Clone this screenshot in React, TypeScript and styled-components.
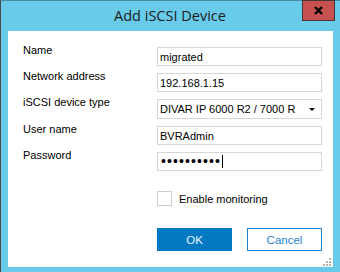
import React from 'react';
import styled, { createGlobalStyle } from 'styled-components';

const GlobalStyle = createGlobalStyle`
  html, body {
    margin: 0;
    padding: 0;
    background: #69cbea;
  }
`;

const Frame = styled.div`
  width: 340px;
  height: 272px;
  box-sizing: border-box;
  background: #69cbea;
  border-left: 1px solid #4a4a4a;
  border-top: 1px solid #4d8ba3;
  display: flex;
  flex-direction: column;
  font-family: "Liberation Sans", Arial, sans-serif;
`;

const TitleBar = styled.div`
  position: relative;
  height: 30px;
  display: flex;
  justify-content: center;
  padding-right: 1px;
`;

const Title = styled.div`
  font-family: "Open Sans", "Noto Sans", sans-serif;
  font-size: 14.5px;
  line-height: 20px;
  margin-top: 5px;
  color: #1b1b1b;
`;

const CloseButton = styled.div`
  position: absolute;
  top: -1px;
  right: 5px;
  width: 33px;
  height: 21px;
  box-sizing: border-box;
  background: #c75050;
  border: 1px solid #4a3535;
  display: flex;
  align-items: center;
  justify-content: center;
`;

const Client = styled.div`
  position: relative;
  margin-left: 7px;
  width: 325px;
  height: 236px;
  background: #fff;
  box-sizing: border-box;
  padding: 16px 11px 0 15px;
  display: flex;
  flex-direction: column;
`;

const Form = styled.div`
  display: grid;
  grid-template-columns: 134px 165px;
  grid-template-rows: 19px 19px 20px 19px 19px;
  row-gap: 7px;
  align-items: start;
`;

const Label = styled.div`
  font-size: 11px;
  line-height: 11px;
  margin-top: -2px;
  color: #000;
`;

const Field = styled.div<{ $tall?: boolean }>`
  height: ${p => (p.$tall ? 20 : 19)}px;
  box-sizing: border-box;
  border: 1px solid #d7d7d7;
  padding: 0 6px 0 2px;
  display: flex;
  align-items: center;
  justify-content: space-between;
  font-size: 11px;
  color: #000;
  white-space: nowrap;
`;

const Dots = styled.span`
  font-size: 14px;
  letter-spacing: 1.1px;
  line-height: 15px;
  display: flex;
  align-items: center;
  margin-left: 1px;
`;

const Caret = styled.span`
  width: 1px;
  height: 13px;
  background: #000;
  margin-left: 1px;
`;

const PasswordValue = styled.span`
  display: flex;
  align-items: center;
`;

const CheckRow = styled.div`
  margin: 20px 0 0 134px;
  display: flex;
  align-items: center;
  gap: 7px;
  font-size: 11px;
  color: #000;
`;

const CheckBox = styled.div`
  width: 15px;
  height: 15px;
  box-sizing: border-box;
  border: 1px solid #cdcdcd;
  background: #fff;
`;

const ButtonRow = styled.div`
  margin: 22px 0 0 134px;
  display: flex;
  gap: 15px;
`;

const Button = styled.div<{ $primary?: boolean }>`
  width: 75px;
  height: 23px;
  box-sizing: border-box;
  display: flex;
  align-items: center;
  justify-content: center;
  font-size: 11.5px;
  background: ${p => (p.$primary ? '#0079c2' : '#fff')};
  color: ${p => (p.$primary ? '#eef4fa' : '#1f7fcc')};
  border: 1px solid ${p => (p.$primary ? '#0079c2' : '#1f84d2')};
`;

const Grip = styled.svg`
  position: absolute;
  right: 2px;
  bottom: 1px;
`;

const ComboArrow = () => (
  <svg width="6" height="3" viewBox="0 0 6 3">
    <path d="M0 0h6L3 3z" fill="#000" />
  </svg>
);

const App: React.FunctionComponent = () => {
  return (
    <>
      <GlobalStyle />
      <Frame>
        <TitleBar>
          <Title>Add iSCSI Device</Title>
          <CloseButton>
            <svg width="9" height="9" viewBox="0 0 9 9">
              <path d="M1 1L8 8M8 1L1 8" stroke="#000" strokeWidth="2.4" />
            </svg>
          </CloseButton>
        </TitleBar>
        <Client>
          <Form>
            <Label>Name</Label>
            <Field>migrated</Field>
            <Label>Network address</Label>
            <Field>192.168.1.15</Field>
            <Label>iSCSI device type</Label>
            <Field $tall>
              DIVAR IP 6000 R2 / 7000 R
              <ComboArrow />
            </Field>
            <Label>User name</Label>
            <Field>BVRAdmin</Field>
            <Label>Password</Label>
            <Field>
              <PasswordValue>
                <Dots>••••••••••</Dots>
                <Caret />
              </PasswordValue>
            </Field>
          </Form>
          <CheckRow>
            <CheckBox />
            Enable monitoring
          </CheckRow>
          <ButtonRow>
            <Button $primary>OK</Button>
            <Button>Cancel</Button>
          </ButtonRow>
          <Grip width="8" height="8" viewBox="0 0 8 8">
            <g fill="#b5b5b5">
              <rect x="6" y="0" width="2" height="2" />
              <rect x="3" y="3" width="2" height="2" />
              <rect x="6" y="3" width="2" height="2" />
              <rect x="0" y="6" width="2" height="2" />
              <rect x="3" y="6" width="2" height="2" />
              <rect x="6" y="6" width="2" height="2" />
            </g>
          </Grip>
        </Client>
      </Frame>
    </>
  );
};

export default App;
